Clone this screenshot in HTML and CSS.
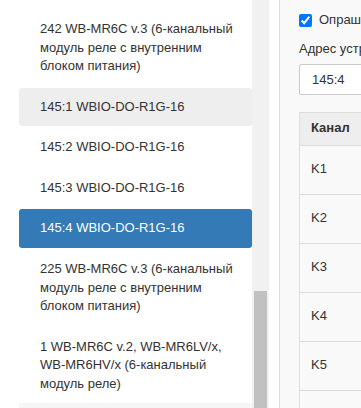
FILE: index.html
```html
<!DOCTYPE html>
<html lang="ru">
<head>
  <meta charset="UTF-8" />
  <title>Устройства</title>
  <link rel="stylesheet" href="styles.css">
</head>
<body>
  <div class="layout">
    <div class="sidebar">
      <ul class="nav-list">
        <li><a href="#">242 WB-MR6C v.3 (6-канальный модуль реле с внутренним блоком питания)</a></li>
        <li class="hover"><a href="#">145:1 WBIO-DO-R1G-16</a></li>
        <li><a href="#">145:2 WBIO-DO-R1G-16</a></li>
        <li><a href="#">145:3 WBIO-DO-R1G-16</a></li>
        <li class="active"><a href="#">145:4 WBIO-DO-R1G-16</a></li>
        <li><a href="#">225 WB-MR6C v.3 (6-канальный модуль реле с внутренним блоком питания)</a></li>
        <li><a href="#">1 WB-MR6C v.2, WB-MR6LV/x, WB-MR6HV/x (6-канальный модуль реле)</a></li>
        <li class="light"><a href="#">&nbsp;</a></li>
      </ul>
    </div>
    <div class="scrollbar">
      <div class="thumb"></div>
    </div>
    <div class="panel">
      <div class="check-row">
        <input type="checkbox" checked>
        <span>Опрашивать</span>
      </div>
      <label class="field-label">Адрес устройства</label>
      <div class="input">145:4</div>
      <table class="channels">
        <thead>
          <tr><th class="col-name">Канал</th><th>Состояние</th></tr>
        </thead>
        <tbody>
          <tr><td>K1</td><td></td></tr>
          <tr><td>K2</td><td></td></tr>
          <tr><td>K3</td><td></td></tr>
          <tr><td>K4</td><td></td></tr>
          <tr><td>K5</td><td></td></tr>
          <tr><td>&nbsp;</td><td></td></tr>
        </tbody>
      </table>
    </div>
  </div>
</body>
</html>
```

FILE: styles.css
```css
body {
  margin: 0;
  font-family: 'Liberation Sans', Arial, sans-serif;
  font-size: 13px;
  line-height: 1.42857;
  color: #333;
  background: #fff;
  overflow: hidden;
}

.layout {
  display: flex;
  height: 408px;
  width: 361px;
  overflow: hidden;
}

/* device list */
.sidebar {
  flex: 0 0 252px;
  padding-left: 19px;
  box-sizing: border-box;
  overflow: hidden;
}

.nav-list {
  list-style: none;
  margin: 10px 0 0;
  padding: 0;
}

.nav-list li + li {
  margin-top: 2px;
}

.nav-list li.light {
  margin-top: 0;
}

.nav-list a {
  display: block;
  padding: 10px 15px 10px 21px;
  border-radius: 3px;
  color: #333;
  text-decoration: none;
}

.nav-list li.hover a {
  background: #eee;
}

.nav-list li.light a {
  background: #f5f5f5;
}

.nav-list li.active a {
  background: #337ab7;
  color: #fff;
}

.scrollbar {
  flex: 0 0 17px;
  box-sizing: border-box;
  padding: 0 2px;
  background: #f1f1f1;
}

.thumb {
  margin-top: 291px;
  height: 200px;
  background: #c1c1c1;
}

/* device settings */
.panel {
  flex: 0 0 400px;
  margin-left: 10px;
  border-left: 1px solid #ddd;
  background: #f9f9f9;
  padding: 11px 0 0 19px;
  box-sizing: border-box;
}

.check-row {
  display: flex;
  align-items: center;
  gap: 7px;
  height: 19px;
  margin-bottom: 10px;
  white-space: nowrap;
}

.check-row input {
  width: 13px;
  height: 13px;
  margin: 0;
}

.field-label {
  display: block;
  margin-bottom: 5px;
  white-space: nowrap;
}

.input {
  height: 31px;
  box-sizing: border-box;
  border: 1px solid #ccc;
  border-radius: 2px;
  background: #fff;
  padding: 0 12px;
  line-height: 29px;
}

.channels {
  margin-top: 17px;
  width: 100%;
  border-collapse: collapse;
}

.channels th,
.channels td {
  border: 1px solid #ddd;
  text-align: left;
  padding: 0 11px;
  white-space: nowrap;
}

.channels th {
  height: 32px;
  background: #eee;
  font-weight: bold;
}

.channels td {
  height: 48px;
}

.channels .col-name {
  width: 34px;
}
```
